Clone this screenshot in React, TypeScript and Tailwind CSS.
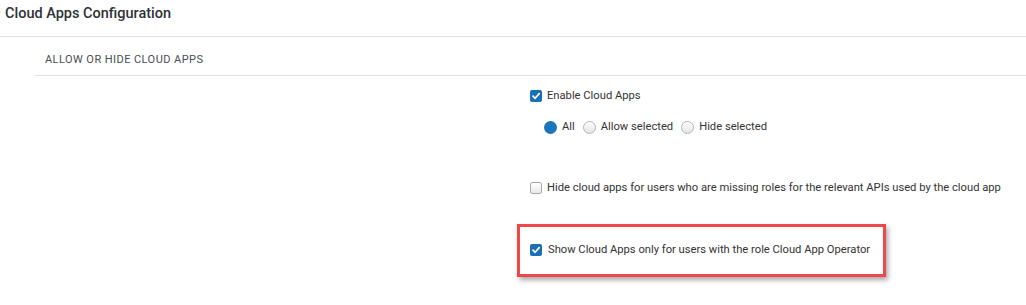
import React from "react";

const font = { fontFamily: "Roboto, 'Liberation Sans', sans-serif" };

function CheckBox({ checked }: { checked: boolean }) {
  if (checked) {
    return (
      <span className="w-[12px] h-[12px] rounded-[2px] bg-[#1b6fb5] flex items-center justify-center shrink-0">
        <svg width="10" height="10" viewBox="0 0 10 10">
          <path d="M2 5.2 L4.1 7.3 L8.2 2.6" fill="none" stroke="#fff" strokeWidth="1.7" strokeLinecap="round" strokeLinejoin="round" />
        </svg>
      </span>
    );
  }
  return (
    <span className="w-[12px] h-[12px] rounded-[2px] border border-[#a9a9a9] bg-gradient-to-b from-white to-[#e8e8e8] shrink-0" />
  );
}

function Radio({ checked, label }: { checked: boolean; label: string }) {
  return (
    <label className="flex items-center gap-[5px]">
      {checked ? (
        <span className="w-[13px] h-[13px] rounded-full bg-[#1b74bd] shrink-0" />
      ) : (
        <span className="w-[13px] h-[13px] rounded-full border border-[#b5b5b5] bg-gradient-to-b from-white to-[#e4e4e4] shrink-0" />
      )}
      <span>{label}</span>
    </label>
  );
}

export default function App() {
  return (
    <div className="w-[1026px] h-[305px] bg-white text-[#333] overflow-hidden" style={font}>
      {/* page header */}
      <header className="h-[37px] border-b border-[#e2e2e2] flex items-center pl-[5px] pb-[9px]">
        <h1 className="text-[14.5px] font-medium text-[#2f3237]">Cloud Apps Configuration</h1>
      </header>

      <section className="ml-[34px]">
        <div className="h-[39px] border-b border-[#e2e2e2] flex items-end pl-[11px] pb-[7px]">
          <h2 className="text-[11px] tracking-[0.04em] text-[#4a4d52] uppercase">Allow or hide cloud apps</h2>
        </div>

        <div className="pl-[496px] text-[11.2px] text-[#333] whitespace-nowrap">
          <label className="flex items-center gap-[5px] mt-[13px] h-[14px]">
            <CheckBox checked />
            <span>Enable Cloud Apps</span>
          </label>

          <div className="flex items-center gap-[8px] ml-[14px] mt-[17px] h-[14px]">
            <Radio checked label="All" />
            <Radio checked={false} label="Allow selected" />
            <Radio checked={false} label="Hide selected" />
          </div>

          <label className="flex items-center gap-[5px] mt-[47px] h-[14px]">
            <CheckBox checked={false} />
            <span>Hide cloud apps for users who are missing roles for the relevant APIs used by the cloud app</span>
          </label>

          <div className="-ml-[13px] mt-[29px] w-[369px] h-[53px] border-[3px] border-[#f0484a] shadow-[2px_3px_5px_rgba(0,0,0,0.35)] flex items-center pl-[10px]">
            <label className="flex items-center gap-[6px]">
              <CheckBox checked />
              <span>Show Cloud Apps only for users with the role Cloud App Operator</span>
            </label>
          </div>
        </div>
      </section>
    </div>
  );
}
